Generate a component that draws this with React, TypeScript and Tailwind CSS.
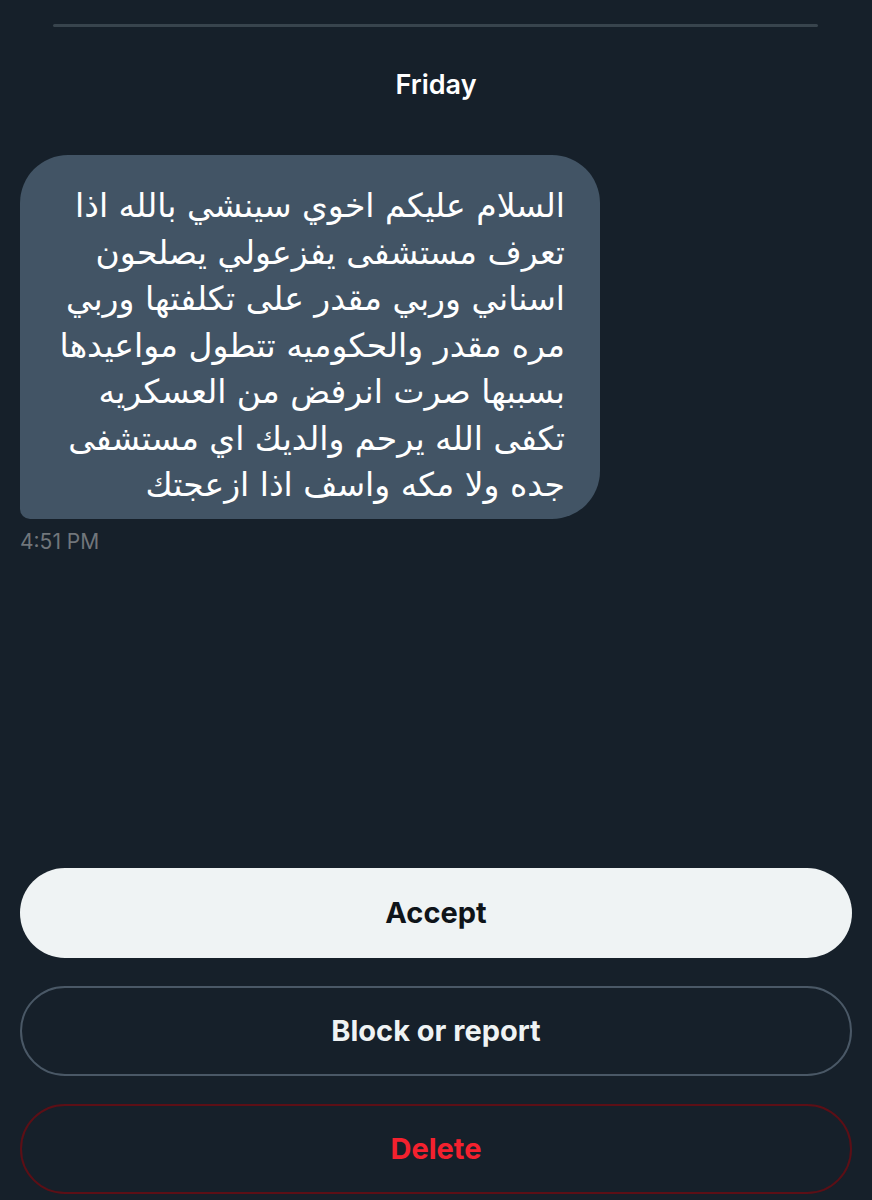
export default function App() {
  const lines = [
    "السلام عليكم اخوي سينشي بالله اذا",
    "تعرف مستشفى يفزعولي يصلحون",
    "اسناني وربي مقدر على تكلفتها وربي",
    "مره مقدر والحكوميه تتطول مواعيدها",
    "بسببها صرت انرفض من العسكريه",
    "تكفى الله يرحم والديك اي مستشفى",
    "جده ولا مكه واسف اذا ازعجتك",
  ];
  return (
    <div className="w-[872px] h-[1200px] bg-[#16202a] flex flex-col overflow-hidden" style={{ fontFamily: "Inter, 'Open Sans', sans-serif" }}>
      <div className="pl-[53px] pr-[54px] pt-[24px]">
        <div className="h-[3px] bg-[#38444d] rounded-full" />
      </div>
      <div className="text-center text-white font-semibold text-[27px] mt-[41px] leading-[34px]">Friday</div>
      <div className="px-[20px] mt-[53px]">
        <div
          dir="rtl"
          className="w-[580px] bg-[#425465] rounded-[48px] rounded-bl-[10px] pr-[35px] pl-[20px] pt-[28px] pb-[10px] text-white text-[33px] leading-[46.5px] text-right"
          style={{ fontFamily: "'DejaVu Sans', 'Noto Sans', sans-serif" }}
        >
          {lines.map((l, i) => (
            <div key={i} className="whitespace-nowrap">{l}</div>
          ))}
        </div>
        <div className="text-[#71767b] text-[21px] mt-[10px] leading-[26px]">4:51 PM</div>
      </div>
      <div className="flex-1" />
      <div className="px-[20px] pb-[6px] flex flex-col gap-[28px]">
        <button className="h-[90px] rounded-full bg-[#eff3f4] text-[#0f1419] font-bold text-[29px]">Accept</button>
        <button className="h-[90px] rounded-full border-2 border-[#4a5866] text-[#eff3f4] font-bold text-[29px]">Block or report</button>
        <button className="h-[90px] rounded-full border-2 border-[#5c0f16] text-[#f4212e] font-bold text-[29px]">Delete</button>
      </div>
    </div>
  );
}
